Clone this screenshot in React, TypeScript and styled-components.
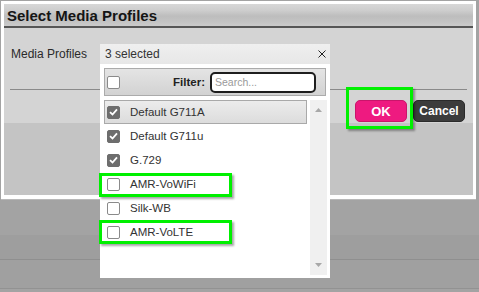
import React from "react";
import styled, { createGlobalStyle } from "styled-components";

const GlobalStyle = createGlobalStyle`
  html, body { margin: 0; padding: 0; }
  body { background: #a3a3a3; font-family: "Liberation Sans", Arial, sans-serif; }
  * { box-sizing: border-box; }
`;

const Page = styled.div`
  position: relative;
  width: 479px;
  height: 292px;
  overflow: hidden;
  background: #a3a3a3;
  display: flex;
  flex-direction: column;
`;

const Band = styled.div<{ $h: number; $bg: string; $line?: string }>`
  flex-shrink: 0;
  height: ${(p) => p.$h}px;
  background: ${(p) => p.$bg};
  border-bottom: ${(p) => (p.$line ? `1px solid ${p.$line}` : "none")};
`;

const Dialog = styled.div`
  position: absolute;
  left: 1px;
  top: 1px;
  width: 475px;
  height: 198px;
  border: 3px solid #ffffff;
  border-bottom-width: 4px;
  box-shadow: 0 1px 0 #b8b8b8;
  display: flex;
  flex-direction: column;
  background: #c4c4c4;
`;

const TitleBar = styled.div`
  height: 24px;
  flex-shrink: 0;
  display: flex;
  align-items: center;
  padding-left: 3px;
  background: linear-gradient(#d7d7d7 0%, #cdcdcd 30%, #bdbdbd 55%, #c3c3c3 80%, #cbcbcb 100%);
  border-bottom: 2px solid #565656;
  font-weight: bold;
  font-size: 15px;
  color: #151515;
`;

const FormArea = styled.div`
  height: 95px;
  flex-shrink: 0;
  background: #d4d4d4;
  padding: 16px 6px 0 6px;
  display: flex;
  flex-direction: column;
`;

const LowerArea = styled.div`
  flex: 1;
  background: #c4c4c4;
`;

const FieldRow = styled.div`
  display: flex;
  align-items: center;
  height: 20px;
`;

const Label = styled.div`
  width: 90px;
  padding-left: 1px;
  font-size: 12px;
  color: #2a2a2a;
`;

const Select = styled.div`
  position: relative;
  width: 230px;
  height: 20px;
  display: flex;
  align-items: center;
  justify-content: space-between;
  padding: 0 4px 0 5px;
  background: linear-gradient(#efefef, #e7e7e7);
  font-size: 12px;
  color: #333;
`;

const Rule = styled.div`
  margin-top: 25px;
  height: 1px;
  background: #8a8a8a;
`;

const ButtonRow = styled.div`
  margin-top: 10px;
  display: flex;
  justify-content: flex-end;
  gap: 6px;
  padding-right: 2px;
`;

const Button = styled.button<{ $primary?: boolean }>`
  position: relative;
  width: 52px;
  height: 22px;
  padding: 0;
  border-radius: 5px;
  border: 1px solid ${(p) => (p.$primary ? "#c9156b" : "#2a2a2a")};
  background: ${(p) => (p.$primary ? "#ee1a80" : "#3c3c3c")};
  color: #fff;
  font-family: "Liberation Sans", Arial, sans-serif;
  font-weight: bold;
  font-size: ${(p) => (p.$primary ? "13px" : "12px")};
`;

const Panel = styled.div`
  position: absolute;
  left: 0;
  top: 20px;
  width: 230px;
  height: 214px;
  background: #fff;
  padding: 4px 3px 3px 4px;
  display: flex;
  flex-direction: column;
  gap: 4px;
  z-index: 5;
`;

const FilterBox = styled.div`
  width: 222px;
  height: 28px;
  flex-shrink: 0;
  display: flex;
  align-items: center;
  padding: 0 9px 0 2px;
  border: 1px solid #ababab;
  background: linear-gradient(#e4e4e4, #d2d2d2);
`;

const FilterLabel = styled.span`
  margin-left: auto;
  margin-right: 5px;
  font-weight: bold;
  font-size: 11.5px;
  color: #222;
`;

const SearchInput = styled.input`
  width: 106px;
  height: 21px;
  border: 2px solid #1e1e1e;
  border-radius: 5px;
  padding: 0 0 0 3px;
  background: #fff;
  font-family: "Liberation Sans", Arial, sans-serif;
  font-size: 10.5px;
  outline: none;
  &::placeholder { color: #9a9a9a; }
`;

const ListArea = styled.div`
  flex: 1;
  display: flex;
  gap: 3px;
`;

const Items = styled.div`
  width: 203px;
  display: flex;
  flex-direction: column;
`;

const Item = styled.div<{ $active?: boolean }>`
  position: relative;
  height: 24px;
  flex-shrink: 0;
  display: flex;
  align-items: center;
  gap: 10px;
  padding-left: 2px;
  border: 1px solid ${(p) => (p.$active ? "#a9a9a9" : "transparent")};
  background: ${(p) => (p.$active ? "linear-gradient(#ececec, #dcdcdc)" : "#fff")};
  font-size: 11.5px;
  color: #333;
`;

const Box = styled.span<{ $checked?: boolean }>`
  width: 13px;
  height: 13px;
  flex-shrink: 0;
  border-radius: 2px;
  border: 1px solid ${(p) => (p.$checked ? "#6d6d6d" : "#8a8a8a")};
  background: ${(p) => (p.$checked ? "#6d6d6d" : "#fff")};
  display: flex;
  align-items: center;
  justify-content: center;
`;

const Scrollbar = styled.div`
  width: 17px;
  background: #f0f0f0;
  display: flex;
  flex-direction: column;
  justify-content: space-between;
  align-items: center;
  padding: 8px 0 8px;
`;

const Mark = styled.div<{ $l: number; $t: number; $w: number; $h: number }>`
  position: absolute;
  left: ${(p) => p.$l}px;
  top: ${(p) => p.$t}px;
  width: ${(p) => p.$w}px;
  height: ${(p) => p.$h}px;
  border: 3px solid #00f000;
  box-shadow: 2px 2px 2px rgba(0, 0, 0, 0.35);
  pointer-events: none;
  z-index: 6;
`;

const Check = ({ checked }: { checked?: boolean }) => (
  <Box $checked={checked}>
    {checked && (
      <svg width="9" height="8" viewBox="0 0 9 8">
        <path d="M1 4.2 L3.5 6.5 L8 1.3" stroke="#fff" strokeWidth="1.8" fill="none" />
      </svg>
    )}
  </Box>
);

const items = [
  { label: "Default G711A", checked: true, active: true },
  { label: "Default G711u", checked: true },
  { label: "G.729", checked: true },
  { label: "AMR-VoWiFi", checked: false, mark: 0 },
  { label: "Silk-WB", checked: false },
  { label: "AMR-VoLTE", checked: false, mark: -1 },
];

export default function App() {
  return (
    <>
      <GlobalStyle />
      <Page>
        <Band $h={235} $bg="#a3a3a3" />
        <Band $h={25} $bg="#9e9e9e" $line="#8f8f8f" />
        <Band $h={29} $bg="#a0a0a0" $line="#929292" />
        <Band $h={2} $bg="#a3a3a3" />
        <Dialog>
          <TitleBar>Select Media Profiles</TitleBar>
          <FormArea>
            <FieldRow>
              <Label>Media Profiles</Label>
              <Select>
                <span>3 selected</span>
                <svg width="8" height="8" viewBox="0 0 8 8">
                  <path d="M0.5 0.5 L7.5 7.5 M7.5 0.5 L0.5 7.5" stroke="#222" strokeWidth="1" />
                </svg>
                <Panel>
                  <FilterBox>
                    <Check />
                    <FilterLabel>Filter:</FilterLabel>
                    <SearchInput placeholder="Search..." readOnly />
                  </FilterBox>
                  <ListArea>
                    <Items>
                      {items.map((it) => (
                        <Item key={it.label} $active={it.active}>
                          <Check checked={it.checked} />
                          <span>{it.label}</span>
                          {it.mark !== undefined && (
                            <Mark $l={-6} $t={it.mark} $w={133} $h={24} />
                          )}
                        </Item>
                      ))}
                    </Items>
                    <Scrollbar>
                      <svg width="7" height="4" viewBox="0 0 7 4">
                        <path d="M0 4 L3.5 0 L7 4 Z" fill="#a8a8a8" />
                      </svg>
                      <svg width="7" height="4" viewBox="0 0 7 4">
                        <path d="M0 0 L7 0 L3.5 4 Z" fill="#a8a8a8" />
                      </svg>
                    </Scrollbar>
                  </ListArea>
                </Panel>
              </Select>
            </FieldRow>
            <Rule />
            <ButtonRow>
              <Button $primary>
                OK
                <Mark $l={-10} $t={-14} $w={67} $h={42} />
              </Button>
              <Button>Cancel</Button>
            </ButtonRow>
          </FormArea>
          <LowerArea />
        </Dialog>
      </Page>
    </>
  );
}
